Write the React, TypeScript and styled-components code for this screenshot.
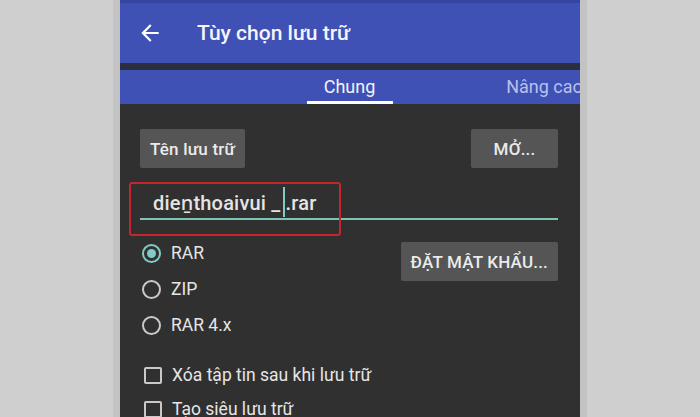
import React from 'react';
import styled, { createGlobalStyle } from 'styled-components';

const GlobalStyle = createGlobalStyle`
  html, body {
    margin: 0;
    padding: 0;
    background: #cfcfcf;
    font-family: Roboto, 'Noto Sans', 'Liberation Sans', sans-serif;
  }
`;

const radios = [
  { label: 'RAR', checked: true },
  { label: 'ZIP', checked: false },
  { label: 'RAR 4.x', checked: false },
];

const checks = ['Xóa tập tin sau khi lưu trữ', 'Tạo siêu lưu trữ'];

const BackIcon = () => (
  <svg width='26' height='26' viewBox='0 0 24 24' fill='#ffffff'>
    <path d='M20 11H7.83l5.59-5.59L12 4l-8 8 8 8 1.41-1.41L7.83 13H20v-2z' />
  </svg>
);

const App: React.FC = () => {
  return (
    <>
      <GlobalStyle />
      <Page>
        <Phone>
          <StatusStrip />
          <AppBar>
            <BackIcon />
            <Title>Tùy chọn lưu trữ</Title>
          </AppBar>
          <Divider />
          <TabBar>
            <Tab $active>
              Chung
              <Indicator />
            </Tab>
            <Tab>Nâng cao</Tab>
          </TabBar>
          <Body>
            <ButtonRow>
              <FlatButton>Tên lưu trữ</FlatButton>
              <FlatButton $wide>MỞ...</FlatButton>
            </ButtonRow>
            <Field>
              <FieldText>
                dieṉthoaivui _<Caret />.rar
              </FieldText>
              <Highlight />
            </Field>
            <OptionsRow>
              <RadioList>
                {radios.map((r) => (
                  <OptionItem key={r.label}>
                    <Radio $checked={r.checked} />
                    <Label>{r.label}</Label>
                  </OptionItem>
                ))}
              </RadioList>
              <FlatButton $wide>ĐẶT MẬT KHẨU...</FlatButton>
            </OptionsRow>
            <CheckList>
              {checks.map((c) => (
                <OptionItem key={c} $short>
                  <CheckBox />
                  <Label>{c}</Label>
                </OptionItem>
              ))}
            </CheckList>
          </Body>
        </Phone>
      </Page>
    </>
  );
};

export default App;

const Page = styled.div`
  width: 700px;
  height: 417px;
  overflow: hidden;
  display: flex;
  justify-content: center;
`;

const Phone = styled.div`
  width: 460px;
  height: 417px;
  overflow: hidden;
  display: flex;
  flex-direction: column;
  background: #303030;
  border-left: 7px solid #c3c3c3;
  border-right: 7px solid #c3c3c3;

  & > * {
    flex-shrink: 0;
  }
`;

const StatusStrip = styled.div`
  height: 3px;
  background: #34449f;
`;

const AppBar = styled.div`
  height: 60px;
  display: flex;
  align-items: center;
  padding-left: 17px;
  background: #3f51b5;
`;

const Title = styled.span`
  margin-left: 34px;
  color: #f4f5fb;
  font-size: 21px;
  font-weight: 500;
`;

const Divider = styled.div`
  height: 7px;
  background: #2b2e3e;
`;

const TabBar = styled.div`
  height: 34px;
  display: flex;
  padding-left: 132px;
  background: #3f51b5;
  overflow: hidden;
`;

const Tab = styled.div<{ $active?: boolean }>`
  position: relative;
  flex: 0 0 195px;
  display: flex;
  align-items: center;
  justify-content: center;
  padding-bottom: 2px;
  font-size: 18px;
  color: ${(p) => (p.$active ? '#f2f3fa' : '#b9c1ea')};
`;

const Indicator = styled.span`
  position: absolute;
  bottom: 0;
  left: 55px;
  width: 86px;
  height: 3px;
  background: #ffffff;
`;

const Body = styled.div`
  display: flex;
  flex-direction: column;
  padding: 25px 22px 0 20px;
`;

const ButtonRow = styled.div`
  display: flex;
  justify-content: space-between;
`;

const FlatButton = styled.div<{ $wide?: boolean }>`
  height: 39px;
  display: flex;
  align-items: center;
  justify-content: center;
  padding: 0 ${(p) => (p.$wide ? '10px' : '10px')};
  min-width: ${(p) => (p.$wide ? '87px' : 'auto')};
  box-sizing: border-box;
  background: #555555;
  border-radius: 2px;
  color: #ebebeb;
  font-size: 17px;
  font-weight: 500;
  letter-spacing: 0.2px;
`;

const Field = styled.div`
  position: relative;
  margin-top: 14px;
  height: 36px;
  border-bottom: 2px solid #7fc2b6;
  padding-left: 13px;
  display: flex;
  align-items: center;
`;

const FieldText = styled.span`
  padding-top: 4px;
  color: #e4e4e4;
  font-size: 20px;
  font-weight: 500;
  letter-spacing: 0.2px;
  white-space: pre;
`;

const Caret = styled.span`
  display: inline-block;
  width: 2px;
  height: 30px;
  margin: 0 1px 0 2px;
  vertical-align: -7px;
  background: #80cbc4;
`;

const Highlight = styled.div`
  position: absolute;
  left: -11px;
  top: 0;
  width: 212px;
  height: 54px;
  box-sizing: border-box;
  border: 2px solid #c4262d;
  border-radius: 3px;
`;

const OptionsRow = styled.div`
  display: flex;
  justify-content: space-between;
  align-items: flex-start;
  margin-top: 15px;

  & > ${FlatButton} {
    margin-top: 7px;
  }
`;

const RadioList = styled.div`
  display: flex;
  flex-direction: column;
`;

const CheckList = styled.div`
  display: flex;
  flex-direction: column;
  margin-top: 15px;
`;

const OptionItem = styled.div<{ $short?: boolean }>`
  height: ${(p) => (p.$short ? '34px' : '36px')};
  display: flex;
  align-items: center;
`;

const Radio = styled.span<{ $checked: boolean }>`
  width: 19px;
  height: 19px;
  margin-left: 2px;
  box-sizing: border-box;
  border-radius: 50%;
  border: 2px solid ${(p) => (p.$checked ? '#80cbc4' : '#c9c9c9')};
  display: flex;
  align-items: center;
  justify-content: center;

  &::after {
    content: '';
    display: ${(p) => (p.$checked ? 'block' : 'none')};
    width: 9px;
    height: 9px;
    border-radius: 50%;
    background: #80cbc4;
  }
`;

const CheckBox = styled.span`
  width: 18px;
  height: 17px;
  margin-left: 4px;
  box-sizing: border-box;
  border: 2px solid #c9c9c9;
  border-radius: 2px;
`;

const Label = styled.span`
  margin-left: 10px;
  color: #e6e6e6;
  font-size: 17.5px;
`;
